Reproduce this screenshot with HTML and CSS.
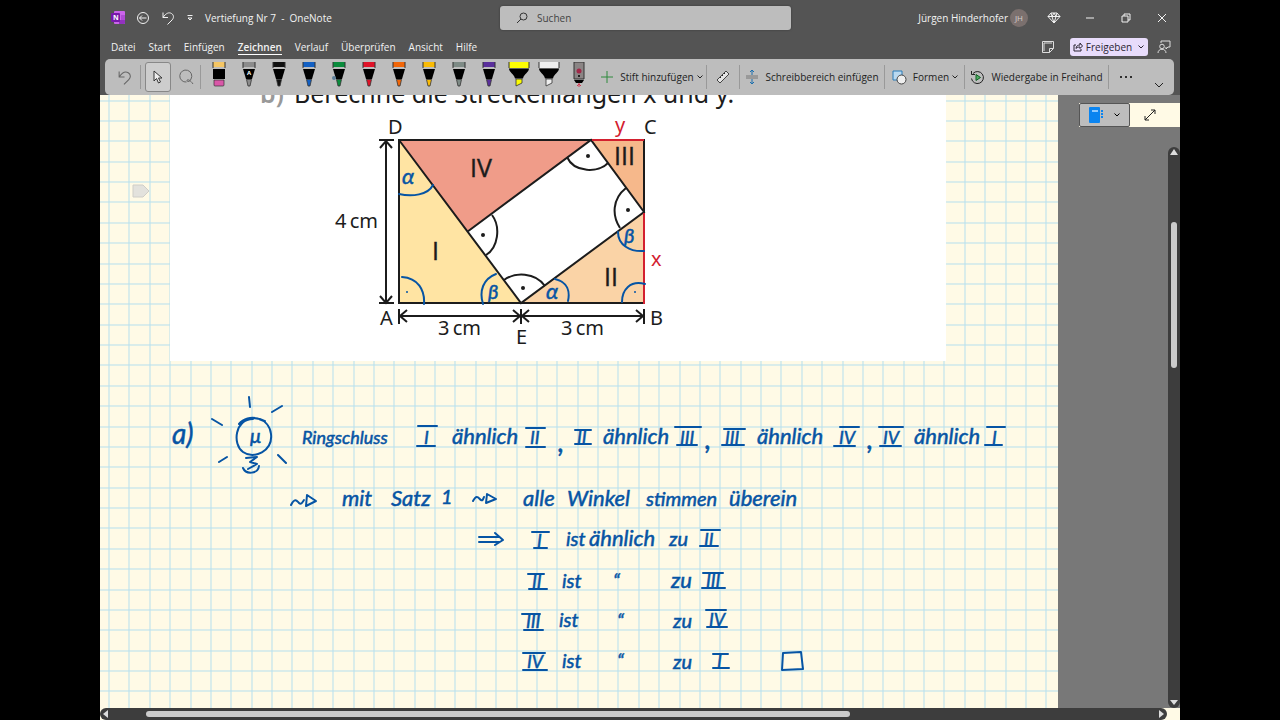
FILE: index.html
```html
<!DOCTYPE html>
<html lang="de">
<head>
<meta charset="utf-8">
<title>Vertiefung Nr 7 - OneNote</title>
<link rel="stylesheet" href="styles.css">
</head>
<body>
<svg class="defs" aria-hidden="true">
  <symbol id="pen" viewBox="0 0 14 26">
    <path class="tint" d="M1 0h12v5H1z"/><path d="M1 0v6M13 0v6" stroke="#333" fill="none"/>
    <path d="M1 7h12L10 17H4z" fill="#000"/><path d="M4.500 17.500h5L8 24H6z" class="tint" stroke="#333" stroke-width=".8"/>
  </symbol>
  <symbol id="marker" viewBox="0 0 22 26">
    <path class="tint" d="M1 0h20v6H1z"/><path d="M1 0v6M21 0v6" stroke="#333" fill="none"/>
    <path d="M1 6.500h20c0 4-5 5-6 10H7C6 11.500 1 10.500 1 6.500z" fill="#000"/><path class="tint" d="M8 17h6v4l-6 3z" stroke="#333" stroke-width=".8"/>
  </symbol>
  <symbol id="down" viewBox="0 0 8 8"><path class="line" d="M1.500 2.500L4 5l2.500-2.500"/></symbol>
  <symbol id="undo" viewBox="0 0 14 14"><path class="line" d="M2 1.500v5h5M2 6.500C5 2 8 1 10.500 2.500S13 7 11 9l-4.500 4.500"/></symbol>
</svg>
<div class="window">
  <header class="titlebar">
    <div class="quick">
      <svg class="logo" viewBox="0 0 14 14"><rect x="3" width="11" height="13" rx="1" fill="#ca64ea"/><path d="M10 4h4v5h-4z" fill="#ae4bd5"/><path d="M8 9h6v3a1 1 0 0 1-1 1H8z" fill="#9332bf"/><rect y="2" width="9" height="9" rx="1" fill="#7719aa"/><text x="2" y="9" class="logo-n">N</text></svg>
      <button class="icon" aria-label="Zurück"><svg width="14" height="14" viewBox="0 0 14 14"><circle class="line" cx="7" cy="7" r="5.500"/><path class="line" d="M10.500 7h-7M6 4.500L3.500 7 6 9.500"/></svg></button>
      <button class="icon" aria-label="Rückgängig"><svg width="14" height="14"><use href="#undo"/></svg></button>
      <button class="icon" aria-label="Symbolleiste anpassen"><svg width="8" height="8" viewBox="0 0 8 8"><path class="line" d="M1.500 1.500h5M2 4l2 2 2-2z"/></svg></button>
      <h1>Vertiefung Nr 7 &nbsp;-&nbsp; OneNote</h1>
    </div>
    <label class="search"><svg width="12" height="12" viewBox="0 0 12 12"><circle class="line" cx="7.500" cy="4.500" r="3.500"/><path class="line" d="M5 7l-4 4"/></svg><input type="search" placeholder="Suchen" aria-label="Suchen"></label>
    <div class="account">
      <span class="user">Jürgen Hinderhofer</span><span class="avatar">JH</span>
      <button class="win first" aria-label="Premium"><svg width="14" height="12" viewBox="0 0 14 12"><path class="line" d="M4 1h6l3 3.500L7 11 1 4.500zM1 4.500h12M4 1l1 3.500L7 11l2-6.500L10 1M5 4.500L7 1l2 3.500"/></svg></button>
      <button class="win" aria-label="Minimieren"><svg width="10" height="10"><path class="line" d="M1 5h8"/></svg></button>
      <button class="win" aria-label="Wiederherstellen"><svg width="10" height="10"><path class="line" d="M1 3h6v6H1zM3 3V1h6v6H7"/></svg></button>
      <button class="win" aria-label="Schließen"><svg width="10" height="10"><path class="line" d="M1 1l8 8M9 1L1 9"/></svg></button>
    </div>
  </header>
  <nav class="tabs">
    <a href="#">Datei</a><a href="#">Start</a><a href="#">Einfügen</a><a href="#" class="active" aria-current="page">Zeichnen</a><a href="#">Verlauf</a><a href="#">Überprüfen</a><a href="#">Ansicht</a><a href="#">Hilfe</a>
    <div class="share-area">
      <button class="icon" aria-label="Notizen"><svg width="12" height="12" viewBox="0 0 12 12"><path class="line" d="M.5.5h11v7l-4 4h-7zM11.500 7.500h-4v4M2 2h8M2 2v8"/></svg></button>
      <button class="share"><svg width="10" height="10" viewBox="0 0 10 10"><path class="line" d="M3 3H1v6h7V7M3 6.500C3 4 5 3 7 3V1l2.500 3L7 6.500V5C5 5 4 5.500 3 6.500z"/></svg>Freigeben<svg class="share-down" width="8" height="8"><use href="#down"/></svg></button>
      <button class="icon" aria-label="Feedback"><svg width="14" height="14" viewBox="0 0 14 14"><path class="line" d="M4 3V1h9v6h-2L9 9V7"/><circle class="line" cx="5" cy="6.500" r="2.300"/><path class="line" d="M1 13c0-5 8-5 8 0"/></svg></button>
    </div>
  </nav>
  <section class="ribbon" aria-label="Zeichnen">
    <button class="tool dim" aria-label="Rückgängig"><svg width="15" height="15"><use href="#undo"/></svg></button>
    <button class="tool selected" aria-label="Auswählen"><svg width="10" height="14" viewBox="0 0 10 14"><path d="M1 1v10l2.500-2.500L5.500 13l2-1-2-4H9z" fill="#eee" stroke="#333"/></svg></button>
    <button class="tool dim" aria-label="Lasso"><svg width="16" height="16" viewBox="0 0 16 16"><path class="line" d="M8.500 13A6 6 0 1 1 13 10c-1 3-4 3-4 1.500s3-1 6 3.500"/></svg></button>
    <div class="pens">
      <button aria-label="Radierer"><svg width="14" height="26" viewBox="0 0 14 26"><path d="M1 0h12v5H1z" fill="#f5c664"/><path d="M1 0v6M13 0v6" stroke="#333"/><path d="M1 7h12v10H1z"/><path d="M2 18h10v5q0 1-1 1H3q-1 0-1-1z" fill="#d957a8" stroke="#333" stroke-width=".7"/></svg></button>
      <button class="gray" aria-label="Stift mit Texterkennung"><svg width="14" height="26" viewBox="0 0 14 26"><use href="#pen"/><text x="5" y="13" class="pen-a">A</text></svg></button>
      <button class="black" aria-label="Stift schwarz"><svg width="14" height="26"><use href="#pen"/></svg></button>
      <button class="blue" aria-label="Stift blau"><svg width="14" height="26"><use href="#pen"/></svg></button>
      <button class="green" aria-label="Stift grün"><svg width="14" height="26"><use href="#pen"/><circle cx="2" cy="16" r="2" fill="#5d7f99"/></svg></button>
      <button class="red" aria-label="Stift rot"><svg width="14" height="26"><use href="#pen"/></svg></button>
      <button class="orange" aria-label="Stift orange"><svg width="14" height="26"><use href="#pen"/></svg></button>
      <button class="gold" aria-label="Stift gold"><svg width="14" height="26"><use href="#pen"/></svg></button>
      <button class="pencil" aria-label="Bleistift"><svg width="14" height="26"><use href="#pen"/></svg></button>
      <button class="violet" aria-label="Stift violett"><svg width="14" height="26"><use href="#pen"/></svg></button>
      <button class="yellow" aria-label="Textmarker gelb"><svg width="22" height="26"><use href="#marker"/></svg></button>
      <button class="white" aria-label="Textmarker weiß"><svg width="22" height="26"><use href="#marker"/></svg></button>
      <button aria-label="Laserpointer"><svg width="14" height="26" viewBox="0 0 14 26"><path d="M2 0h10v17H2z" fill="#8b8585" stroke="#333"/><circle cx="7" cy="9" r="2.500" fill="#a02848"/><circle cx="7" cy="14" r="1"/><path d="M2 18h10l-2 3H4z"/><path d="M7 21v4M5 24l2-2 2 2" stroke="#d23850" fill="none"/></svg></button>
    </div>
    <button class="cmd w-add"><svg width="14" height="14"><path d="M7 1v12M1 7h12" stroke="#2f8a3c"/></svg>Stift hinzufügen<svg width="8" height="8"><use href="#down"/></svg></button>
    <button class="cmd w-ruler" aria-label="Lineal"><svg width="14" height="14" viewBox="0 0 14 14"><path d="M1 10L10 1l3 3-9 9z" fill="#e4e4e4" stroke="#444"/><path class="line" d="M4 7l1 1M6 5l1 1M8 3l1 1"/></svg></button>
    <button class="cmd w-space"><svg width="14" height="16" viewBox="0 0 14 16"><path d="M1 7h12M1 9h12" stroke="#777"/><path d="M7 6V1M5 3l2-2 2 2M7 10v5M5 13l2 2 2-2" stroke="#1b6fae" fill="none"/></svg>Schreibbereich einfügen</button>
    <button class="cmd w-shapes"><svg width="15" height="15" viewBox="0 0 15 15"><path d="M1 1h9v9H1z" fill="#b9d9f1" stroke="#2b7cb9"/><circle cx="9.500" cy="9.500" r="4.500" fill="#eee" stroke="#444"/></svg>Formen<svg width="8" height="8"><use href="#down"/></svg></button>
    <button class="cmd w-replay"><svg width="15" height="15" viewBox="0 0 15 15"><path class="line" d="M3 3.500a6 6 0 1 1-1.500 5M1.500 1v3.500H5"/><path d="M6 4.500v6l4.500-3z" fill="#4fae63" stroke="#125f24"/></svg>Wiedergabe in Freihand</button>
    <button class="cmd w-more" aria-label="Weitere"><svg width="14" height="4"><circle cx="2" cy="2" r="1"/><circle cx="7" cy="2" r="1"/><circle cx="12" cy="2" r="1"/></svg></button>
    <button class="collapse" aria-label="Menüband reduzieren"><svg width="10" height="8"><path class="line" d="M1 2l4 4 4-4"/></svg></button>
  </section>
  <main class="workspace">
    <div class="page">
      <svg class="canvas" role="img" aria-label="Notizseite">
        <defs>
          <pattern id="squares" x="108" y="100" width="163" height="163" patternUnits="userSpaceOnUse">
            <path class="grid" d="M1 0v163M21 0v163M42 0v163M62 0v163M83 0v163M103 0v163M123 0v163M144 0v163M0 1h163M0 21h163M0 41h163M0 62h163M0 82h163M0 102h163M0 123h163M0 143h163"/>
          </pattern>
        </defs>
        <g transform="translate(-100 -95)">
          <rect x="100" y="95" width="3000" height="3000" fill="url(#squares)"/>
          <rect x="170" y="95" width="776" height="266" fill="#fff"/>
          <path d="M133 185h10l6 6-6 6h-10z" fill="#e3e2dd" stroke="#cfcec8"/>
          <g class="print">
            <text class="task part" x="260" y="103">b)</text><text class="task" x="294" y="103">Berechne die Streckenlängen x und y.</text>
            <path d="M399 140L521 303H399z" fill="#ffe4a3"/>
            <path d="M399 140H591L467 232z" fill="#f09c89"/>
            <path d="M591 140h53v72z" fill="#f6b88b"/>
            <path d="M644 212v91H521z" fill="#fad3a6"/>
            <path class="edge" d="M399 140h245v163H399zM399 140L521 303 644 212 591 140 467 232"/>
            <path class="edge accent" d="M592 140h52M644 213v91"/>
            <path class="edge" d="M567 157c7 16 32 16 41 6M492 215c9 12 6 33-6 40M504 280c11-8 31-8 41 6M626 188c-14 11-14 28-6 40"/>
            <path class="edge" d="M379 140h15M379 303h15M386 141v161M380 148l6-7 6 7M380 296l6 7 6-7M399 309v15M521 309v15M644 309v15M400 316h244M407 310l-7 6 7 6M513 310l7 6-7 6M529 310l-7 6 7 6M636 310l7 6-7 6"/>
            <g><circle cx="588" cy="156" r="2"/><circle cx="483" cy="235" r="2"/><circle cx="523" cy="288" r="2"/><circle cx="628" cy="210" r="2"/></g>
            <text x="388" y="134">D</text><text x="644" y="134">C</text><text x="380" y="325">A</text><text x="650" y="325">B</text><text x="516" y="344">E</text>
            <text x="335" y="228">4&thinsp;cm</text><text x="438" y="335">3&thinsp;cm</text><text x="561" y="335">3&thinsp;cm</text>
            <text class="accent-text" x="615" y="132">y</text><text class="accent-text" x="651" y="266">x</text>
            <g class="roman"><text x="432" y="260">I</text><text x="604" y="286">II</text><text x="614" y="165">III</text><text x="470" y="177">IV</text></g>
          </g>
          <g class="ink">
            <path d="M399 194c13 3 29 1 34-9M402 277c16 1 23 13 22 27M496 274c-13 5-17 17-13 30M555 279c13 3 15 13 13 22M618 232c0 13 12 20 26 19M645 284c-15-4-23 6-23 18"/>
            <g><circle cx="407" cy="292" r="1"/><circle cx="635" cy="292" r="1"/></g>
            <text class="big" x="402" y="184">α</text><text class="mid" x="488" y="299">β</text><text class="big" x="546" y="299">α</text><text class="mid" x="624" y="243">β</text>

            <text class="label" x="172" y="444">a)</text>
            <path d="M239 424c9-11 30-7 32 10s-17 26-28 18-8-33 10-33M241 424c6-6 15-8 24-3M250 407l-1-10M272 412l10-6M222 425l-10-6M219 462l8-5M278 455l8 8M246 458l11-1-7 5 7 2-9 5M243 468c3 7 15 6 16-2"/>
            <text class="mid" x="250" y="443">μ</text>
            <text x="302" y="444">Ringschluss</text>
            <text class="big" x="452" y="444">ähnlich</text><text class="big" x="603" y="444">ähnlich</text><text class="big" x="757" y="444">ähnlich</text><text class="big" x="914" y="444">ähnlich</text>
            <text x="424" y="444">I</text><text x="530" y="444">II</text><text x="577" y="444">II</text><text x="680" y="444">III</text><text x="725" y="444">III</text><text x="839" y="444">IV</text><text x="883" y="444">IV</text><text x="992" y="444">I</text>
            <path d="M418 426h19M417 446h18M526 428h19M526 447h19M575 430h16M575 444h16M675 427h26M677 445h20M724 429h21M722 445h22M840 427h19M834 446h21M879 427h24M880 446h21M987 427h18M985 445h17"/>
            <text class="label" x="558" y="452">,</text><text class="label" x="705" y="449">,</text><text class="label" x="867" y="449">,</text>

            <path d="M291 505c4-8 6-4 8-2s3 0 5-3M307 495l9 6-10 5zM473 501c4-8 6-2 8-1s2-1 3-3M487 494l9 5-10 4z"/>
            <text class="big" x="342" y="506">mit</text><text class="big" x="391" y="506">Satz</text><text class="mid" x="441" y="504">1</text>
            <text class="big" x="523" y="506">alle</text><text class="big" x="567" y="506">Winkel</text><text class="mid" x="646" y="506">stimmen</text><text class="big" x="729" y="506">überein</text>

            <path d="M479 537h20M479 542h20M495 533l8 7-8 5"/>
            <text x="537" y="547">I</text><text class="mid" x="566" y="546">ist</text><text class="big" x="589" y="546">ähnlich</text><text class="mid" x="669" y="546">zu</text><text x="704" y="546">II</text>
            <path d="M532 532h17M534 548h13M701 530h19M700 546h18"/>
            <text x="532" y="588">II</text><text class="mid" x="562" y="588">ist</text><text class="mid" x="613" y="588">“</text><text class="big" x="671" y="588">zu</text><text x="706" y="587">III</text>
            <path d="M528 574h16M529 589h18M703 573h20M702 588h23"/>
            <text x="526" y="628">III</text><text class="mid" x="559" y="627">ist</text><text class="mid" x="617" y="628">“</text><text class="mid" x="673" y="628">zu</text><text x="709" y="626">IV</text>
            <path d="M522 614h18M524 630h19M706 610h20M707 627h20"/>
            <text x="527" y="668">IV</text><text class="mid" x="562" y="668">ist</text><text class="mid" x="617" y="668">“</text><text class="mid" x="673" y="669">zu</text><text x="717" y="668">I</text>
            <path d="M523 653h22M523 670h24M713 654h15M713 668h16M783 653l18-1 2 17-21 1z"/>
          </g>
        </g>
      </svg>
    </div>
    <aside class="side">
      <div class="side-tools">
        <button class="notebook" aria-label="Notizbücher"><svg width="14" height="16" viewBox="0 0 14 16"><rect width="11" height="16" rx="1" fill="#0a84f0"/><path d="M3 3h6v2H3z" fill="#8ec9ff"/><path d="M12 4h2M12 7h2M12 10h2" stroke="#0a84f0" stroke-width="2"/></svg><svg class="strong" width="8" height="8"><use href="#down"/></svg></button>
        <button class="expand" aria-label="Vollbild"><svg width="12" height="12" viewBox="0 0 12 12"><path class="line" d="M1 11L11 1M7 1h4v4M1 7v4h4"/></svg></button>
      </div>
      <div class="vbar"><svg width="12" height="12"><path d="M2 8l4-6 4 6z"/></svg><span class="vthumb"></span><svg class="end" width="12" height="12"><path d="M2 4l4 5 4-5z"/></svg></div>
    </aside>
  </main>
  <div class="hbar-row"><div class="hbar"><svg width="12" height="12"><path d="M8 2L3 6l5 4z"/></svg><span class="hthumb"></span><svg class="end" width="12" height="12"><path d="M4 2l5 4-5 4z"/></svg></div></div>
</div>
</body>
</html>
```
FILE: styles.css
```css
* { box-sizing: border-box; }
body { margin: 0; padding: 0 100px; background: #000; font: 10px/14px "Open Sans", "Noto Sans", sans-serif; color: #222; }
button { border: 0; padding: 0; margin: 0; background: none; color: inherit; font: inherit; display: flex; align-items: center; justify-content: center; }
svg { display: block; flex: none; }
.defs { position: absolute; width: 0; height: 0; }
.line { fill: none; stroke: currentColor; stroke-linejoin: round; }
.tint { fill: var(--tint); }
.window { display: flex; flex-direction: column; height: 100vh; background: #545454; overflow: hidden; }

.titlebar { display: grid; grid-template-columns: 400px minmax(160px, 291px) 1fr; align-items: center; height: 35px; color: #f2f2f2; }
.quick { display: flex; align-items: center; padding-left: 11px; }
.logo { width: 14px; height: 14px; }
.logo-n { font: bold 7px "Open Sans", sans-serif; fill: #fff; }
.quick .icon { width: 14px; margin-left: 11px; }
h1 { margin: 0 0 0 8px; font: inherit; white-space: nowrap; }
.quick .icon:nth-of-type(3) { margin-left: 8px; }
.search { display: flex; align-items: center; gap: 9px; height: 24px; padding: 0 16px; background: #bdbdbd; border-radius: 3px; color: #333; box-shadow: 0 0 2px #333; }
.search input { flex: 1; min-width: 0; border: 0; padding: 0; background: none; font: inherit; outline: 0; }
.search input::placeholder { color: #444; }
.account { display: flex; align-items: center; justify-content: flex-end; }
.user { white-space: nowrap; }
.avatar { width: 18px; height: 18px; margin-left: 2px; border-radius: 50%; background: #7b706e; font-size: 8px; line-height: 18px; text-align: center; color: #d8d0ce; }
.win { width: 36px; height: 24px; }
.first { margin-left: 8px; }

.tabs { display: flex; align-items: center; gap: 13px; height: 24px; padding-left: 11px; color: #f2f2f2; }
.tabs a { color: inherit; text-decoration: none; border-bottom: 1px solid transparent; }
.tabs .active { font-weight: 600; border-color: #fff; }
.share-area { display: flex; align-items: center; gap: 9px; margin-left: auto; padding-right: 9px; }
.share-area .icon { color: #ddd; }
.share { height: 18px; width: 78px; margin-left: 7px; gap: 3px; background: #e8dcfb; border-radius: 3px; color: #2b2533; }
.share-down { margin-left: 2px; }

.ribbon { display: flex; align-items: center; height: 36px; margin: 0 6px 0 5px; flex: none; background: #bdbdbd; border-radius: 5px; white-space: nowrap; }
.tool { width: 26px; height: 30px; }
.tool:first-child { width: 36px; padding-left: 4px; height: 24px; border-right: 1px solid #999; margin-right: 4px; }
.selected { background: #cdcdcd; border: 1px solid #888; border-radius: 3px; }
.dim { color: #666; }
.tool:nth-child(3) { width: 30px; height: 24px; border-right: 1px solid #999; }
.pens { display: flex; margin-left: 3px; }
.pens button { width: 30px; height: 30px; align-items: flex-start; padding-top: 0; }
.pen-a { font: bold 6px "Open Sans", sans-serif; fill: #fff; }
.gray { --tint: #8b8b8b; }
.black { --tint: #111; }
.blue { --tint: #1260c4; }
.green { --tint: #0a8c3c; }
.red { --tint: #e01228; }
.orange { --tint: #f26608; }
.gold { --tint: #fabb05; }
.pencil { --tint: #7d8a85; }
.violet { --tint: #5a2f9c; }
.yellow { --tint: #fcfc03; }
.white { --tint: #eee; }
.cmd { height: 24px; gap: 6px; border-right: 1px solid #999; flex: none; }
.cmd svg + svg, .cmd svg:last-child:not(:only-child) { margin-left: -4px; }
.w-add { width: 113px; padding-left: 4px; }
.w-ruler { width: 33px; }
.w-space { width: 145px; }
.w-shapes { width: 80px; padding-left: 2px; }
.w-replay { width: 144px; }
.w-more { width: 34px; border: 0; }
.collapse { margin-left: auto; margin-right: 10px; padding-top: 16px; }

.workspace { display: flex; flex: 1; min-height: 0; }
.page { flex: 1; min-width: 0; overflow: hidden; background: #fffae6; }
.canvas { width: 100%; height: 100%; }
.grid { stroke: #b5dfee; stroke-width: 1; fill: none; }
.print { font: 20px "Noto Sans", sans-serif; fill: #1c1c1c; }
.task { font-size: 25px; }
.part { fill: #999; font-weight: 600; }
.edge { fill: none; stroke: #1c1c1c; stroke-width: 2; }
.accent { stroke: #d3202f; }
.accent-text { fill: #d3202f; }
.roman { font: 25px "Open Sans", sans-serif; stroke: #1c1c1c; stroke-width: 0.4; }
.ink { font: italic 18px Lato, sans-serif; fill: #0654a4; }
.ink path { fill: none; stroke: #0654a4; stroke-width: 2; stroke-linecap: round; stroke-linejoin: round; }
.ink text { stroke: #0654a4; stroke-width: 0.5; }
.ink .mid { font-size: 20px; }
.ink .big { font-size: 22px; }
.ink .label { font-size: 28px; }

.side { display: flex; flex-direction: column; width: 122px; background: #787878; }
.side-tools { display: flex; align-self: flex-end; width: 101px; height: 24px; margin-top: 8px; background: #fffae6; }
.notebook { width: 51px; gap: 10px; background: #bdbdbd; border: 1px solid #555; border-radius: 2px; }
.strong { color: #000; }
.expand { width: 40px; }
.vbar { display: flex; flex-direction: column; flex: 1; align-self: flex-end; width: 12px; margin-top: 20px; background: #3d3d3d; border-radius: 6px; fill: #ddd; }
.vthumb { width: 6px; height: 26%; margin: 63px auto 0; border-radius: 3px; background: #ccc; }
.vbar .end { margin-top: auto; }
.hbar-row { height: 12px; flex: none; background: #fffae6; padding-right: 13px; }
.hbar { display: flex; align-items: center; height: 12px; background: #3d3d3d; border-radius: 6px; fill: #ddd; }
.hthumb { width: 66%; height: 6px; margin-left: 34px; border-radius: 3px; background: #ccc; }
.hbar .end { margin-left: auto; }
```
